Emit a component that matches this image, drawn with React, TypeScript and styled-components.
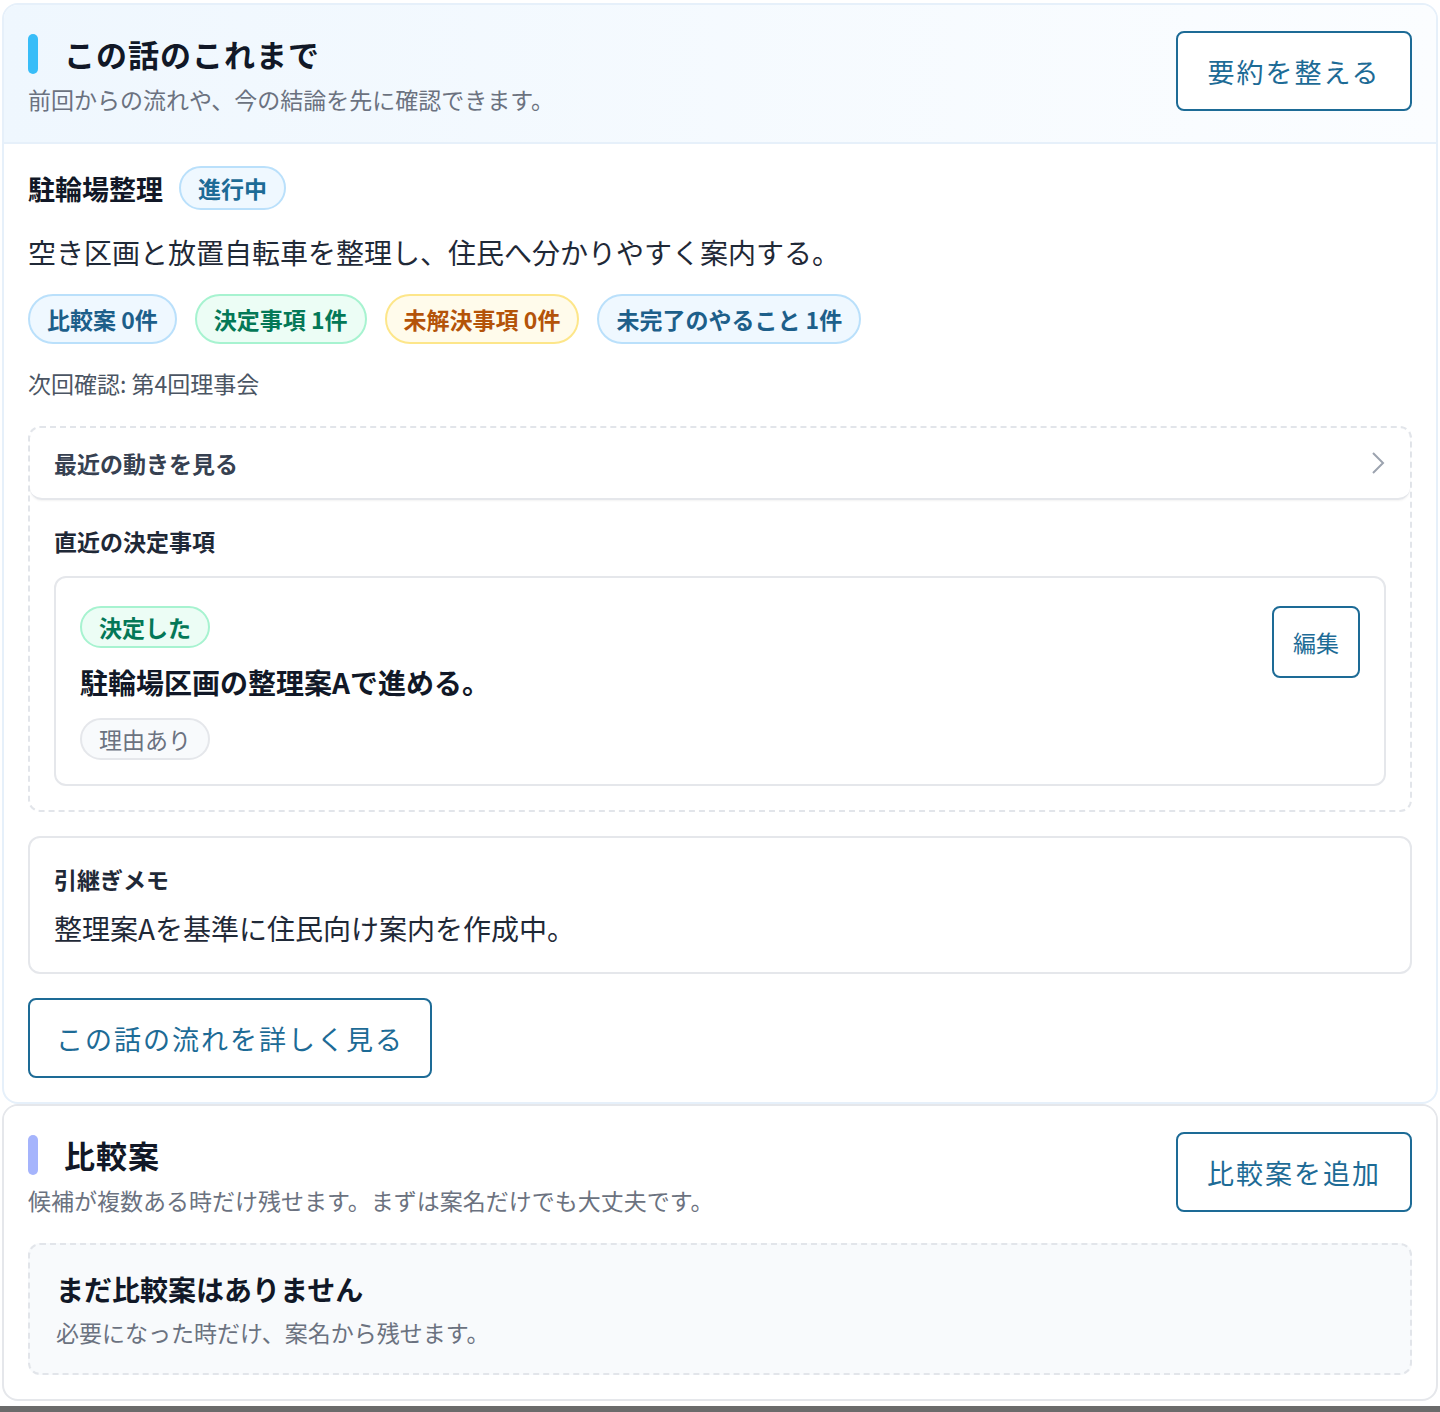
import React from "react";
import styled, { createGlobalStyle } from "styled-components";

const GlobalStyle = createGlobalStyle`
  html, body { margin: 0; background: #fff; }
  body {
    font-family: "Noto Sans CJK JP", "Noto Sans", sans-serif;
    color: #1f2937;
    overflow: hidden;
  }
`;

const Page = styled.div`
  height: 1412px;
  padding: 3px 2px 0 2px;
  box-sizing: border-box;
  overflow: hidden;
  border-bottom: 6px solid #6b6b6b;
`;

const Card = styled.section<{ $tint?: boolean }>`
  border: 2px solid ${(p) => (p.$tint ? "#e6f0fa" : "#e5e7eb")};
  border-radius: 16px;
  background: #fff;
  overflow: hidden;
`;

const Header = styled.div<{ $tint?: boolean }>`
  display: flex;
  justify-content: space-between;
  align-items: flex-start;
  padding: 26px 24px 26px 24px;
  background: ${(p) => (p.$tint ? "linear-gradient(90deg, #eff7fe, #fbfdff)" : "#fff")};
  border-bottom: ${(p) => (p.$tint ? "2px solid #e6f0fa" : "none")};
`;

const TitleRow = styled.div`
  display: flex;
  align-items: center;
  gap: 26px;
`;

const Accent = styled.span<{ $color: string }>`
  width: 10px;
  height: 40px;
  border-radius: 5px;
  background: ${(p) => p.$color};
`;

const Title = styled.h2`
  margin: 0;
  font-size: 31px;
  font-weight: 700;
  color: #111827;
  letter-spacing: 1px;
`;

const Sub = styled.p`
  margin: 6px 0 0 0;
  font-size: 23px;
  color: #6b7280;
`;

const OutlineButton = styled.button<{ $w?: number; $h?: number; $size?: number }>`
  width: ${(p) => p.$w ?? 236}px;
  height: ${(p) => p.$h ?? 80}px;
  border: 2px solid #1d6b96;
  border-radius: 8px;
  background: #fff;
  color: #1d6b96;
  font-family: inherit;
  font-size: ${(p) => p.$size ?? 27}px;
  letter-spacing: ${(p) => (p.$size ? 0 : 2)}px;
  cursor: pointer;
  flex-shrink: 0;
`;

const Body = styled.div`
  padding: 22px 24px 24px 24px;
  display: flex;
  flex-direction: column;
`;

const TopicRow = styled.div`
  display: flex;
  align-items: center;
  gap: 16px;
`;

const Topic = styled.h3`
  margin: 0;
  font-size: 27px;
  font-weight: 700;
  color: #111827;
`;

const Pill = styled.span<{ $bg: string; $bd: string; $fg: string; $size?: number; $h?: number; $bold?: boolean }>`
  display: inline-flex;
  align-items: center;
  height: ${(p) => p.$h ?? 44}px;
  padding: 0 17px;
  border-radius: 999px;
  background: ${(p) => p.$bg};
  border: 2px solid ${(p) => p.$bd};
  color: ${(p) => p.$fg};
  font-size: ${(p) => p.$size ?? 23}px;
  font-weight: ${(p) => (p.$bold === false ? 400 : 700)};
  box-sizing: border-box;
  width: fit-content;
`;

const Desc = styled.p`
  margin: 22px 0 0 0;
  font-size: 28px;
  color: #1f2937;
`;

const PillRow = styled.div`
  display: flex;
  gap: 18px;
  margin-top: 22px;
`;

const Next = styled.p`
  margin: 22px 0 0 0;
  font-size: 23px;
  color: #4b5563;
`;

const Details = styled.div`
  margin-top: 26px;
  border: 2px dashed #e2e5ea;
  border-radius: 12px;
`;

const Summary = styled.div`
  display: flex;
  justify-content: space-between;
  align-items: center;
  height: 70px;
  padding: 0 24px;
  border-bottom: 2px solid #e5e7eb;
  border-radius: 12px;
  box-shadow: 0 1px 2px rgba(0, 0, 0, 0.05);
  font-size: 23px;
  font-weight: 700;
  color: #374151;
`;

const DetailsInner = styled.div`
  padding: 24px 24px 24px 24px;
`;

const SectionLabel = styled.h4`
  margin: 0 0 18px 0;
  font-size: 23px;
  font-weight: 700;
  color: #1f2937;
`;

const DecisionCard = styled.div`
  display: flex;
  justify-content: space-between;
  align-items: flex-start;
  border: 2px solid #e5e7eb;
  border-radius: 12px;
  padding: 28px 24px 24px 24px;
`;

const DecisionMain = styled.div`
  display: flex;
  flex-direction: column;
  gap: 14px;
`;

const DecisionText = styled.p`
  margin: 0 0 2px 0;
  font-size: 28px;
  font-weight: 700;
  color: #111827;
`;

const MemoCard = styled.div`
  margin-top: 24px;
  border: 2px solid #e5e7eb;
  border-radius: 12px;
  padding: 24px 24px 24px 24px;
`;

const MemoText = styled.p`
  margin: 12px 0 0 0;
  font-size: 28px;
  color: #1f2937;
`;

const FooterButtonWrap = styled.div`
  margin-top: 24px;
`;

const Empty = styled.div`
  margin: 0 24px;
  border: 2px dashed #e2e5ea;
  border-radius: 12px;
  background: #f8fafc;
  padding: 24px 26px 24px 26px;
`;

const EmptyTitle = styled.h4`
  margin: 0;
  font-size: 28px;
  font-weight: 700;
  color: #111827;
`;

const Spacer = styled.div`
  height: 24px;
`;

export default function App() {
  return (
    <>
      <GlobalStyle />
      <Page>
        <Card $tint>
          <Header $tint>
            <div>
              <TitleRow>
                <Accent $color="#38bdf8" />
                <Title>この話のこれまで</Title>
              </TitleRow>
              <Sub>前回からの流れや、今の結論を先に確認できます。</Sub>
            </div>
            <OutlineButton>要約を整える</OutlineButton>
          </Header>
          <Body>
            <TopicRow>
              <Topic>駐輪場整理</Topic>
              <Pill $bg="#eff8ff" $bd="#bae0fb" $fg="#1d6b96">進行中</Pill>
            </TopicRow>
            <Desc>空き区画と放置自転車を整理し、住民へ分かりやすく案内する。</Desc>
            <PillRow>
              <Pill $bg="#eff8ff" $bd="#bae0fb" $fg="#1d5f8a" $h={50}>比較案 0件</Pill>
              <Pill $bg="#ecfdf5" $bd="#a7f3d0" $fg="#047857" $h={50}>決定事項 1件</Pill>
              <Pill $bg="#fffbeb" $bd="#fde68a" $fg="#b45309" $h={50}>未解決事項 0件</Pill>
              <Pill $bg="#eff8ff" $bd="#bae0fb" $fg="#1d5f8a" $h={50}>未完了のやること 1件</Pill>
            </PillRow>
            <Next>次回確認: 第4回理事会</Next>
            <Details>
              <Summary>
                最近の動きを見る
                <svg width="16" height="26" viewBox="0 0 16 26" fill="none">
                  <path d="M3 3 L13 13 L3 23" stroke="#9ca3af" strokeWidth="2" />
                </svg>
              </Summary>
              <DetailsInner>
                <SectionLabel>直近の決定事項</SectionLabel>
                <DecisionCard>
                  <DecisionMain>
                    <Pill $bg="#ecfdf5" $bd="#a7f3d0" $fg="#047857" $h={42}>決定した</Pill>
                    <DecisionText>駐輪場区画の整理案Aで進める。</DecisionText>
                    <Pill $bg="#f8fafc" $bd="#e5e7eb" $fg="#6b7280" $bold={false} $h={42}>理由あり</Pill>
                  </DecisionMain>
                  <OutlineButton $w={88} $h={72} $size={23}>
                    編集
                  </OutlineButton>
                </DecisionCard>
              </DetailsInner>
            </Details>
            <MemoCard>
              <SectionLabel style={{ margin: 0 }}>引継ぎメモ</SectionLabel>
              <MemoText>整理案Aを基準に住民向け案内を作成中。</MemoText>
            </MemoCard>
            <FooterButtonWrap>
              <OutlineButton $w={404}>この話の流れを詳しく見る</OutlineButton>
            </FooterButtonWrap>
          </Body>
        </Card>
        <Card>
          <Header>
            <div>
              <TitleRow>
                <Accent $color="#a5b4fc" />
                <Title>比較案</Title>
              </TitleRow>
              <Sub>候補が複数ある時だけ残せます。まずは案名だけでも大丈夫です。</Sub>
            </div>
            <OutlineButton>比較案を追加</OutlineButton>
          </Header>
          <Empty>
            <EmptyTitle>まだ比較案はありません</EmptyTitle>
            <Sub>必要になった時だけ、案名から残せます。</Sub>
          </Empty>
          <Spacer />
        </Card>
      </Page>
    </>
  );
}
